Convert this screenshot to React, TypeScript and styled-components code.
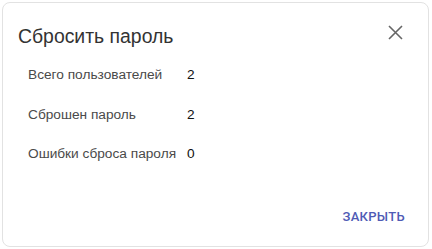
import React from "react";
import styled, { createGlobalStyle } from "styled-components";

const GlobalStyle = createGlobalStyle`
  html, body {
    margin: 0;
    padding: 0;
    background: #ffffff;
    font-family: "Liberation Sans", Arial, sans-serif;
  }
`;

const Dialog = styled.div`
  box-sizing: border-box;
  margin: 2px 0 0 2px;
  width: 427px;
  height: 245px;
  border: 1px solid #e2e2e2;
  border-radius: 8px;
  background: #fff;
  display: flex;
  flex-direction: column;
`;

const Header = styled.div`
  display: flex;
  align-items: flex-start;
  justify-content: space-between;
  padding: 19px 25px 0 15px;
`;

const Title = styled.h2`
  margin: 0;
  font-size: 19.4px;
  font-weight: 400;
  line-height: 28px;
  color: #333;
`;

const CloseButton = styled.button`
  border: none;
  background: none;
  padding: 0;
  margin-top: 2px;
  width: 16px;
  height: 16px;
  display: flex;
  align-items: center;
  justify-content: center;
  cursor: pointer;
`;

const Stats = styled.table`
  align-self: flex-start;
  border-collapse: collapse;
  margin: 5px 0 0 25px;
`;

const Label = styled.td`
  padding: 0 11px 0 0;
  height: 39.5px;
  font-size: 13.7px;
  color: #4a4a4a;
  white-space: nowrap;
`;

const Value = styled.td`
  padding: 0;
  font-size: 13.7px;
  color: #111;
`;

const Actions = styled.div`
  margin-top: auto;
  display: flex;
  justify-content: flex-end;
  padding: 0 23px 22px 0;
`;

const TextButton = styled.button`
  border: none;
  background: none;
  padding: 0;
  font-family: Roboto, "Liberation Sans", Arial, sans-serif;
  font-size: 13px;
  font-weight: 500;
  letter-spacing: 0.3px;
  color: #4f5bb5;
  cursor: pointer;
`;

const stats = [
  { label: "Всего пользователей", value: 2 },
  { label: "Сброшен пароль", value: 2 },
  { label: "Ошибки сброса пароля", value: 0 },
];

export default function App() {
  return (
    <>
      <GlobalStyle />
      <Dialog>
        <Header>
          <Title>Сбросить пароль</Title>
          <CloseButton aria-label="close">
            <svg width="15" height="15" viewBox="0 0 15 15">
              <path d="M1 1 L14 14 M14 1 L1 14" stroke="#666" strokeWidth="1.6" />
            </svg>
          </CloseButton>
        </Header>
        <Stats>
          <tbody>
            {stats.map((s) => (
              <tr key={s.label}>
                <Label>{s.label}</Label>
                <Value>{s.value}</Value>
              </tr>
            ))}
          </tbody>
        </Stats>
        <Actions>
          <TextButton>ЗАКРЫТЬ</TextButton>
        </Actions>
      </Dialog>
    </>
  );
}
